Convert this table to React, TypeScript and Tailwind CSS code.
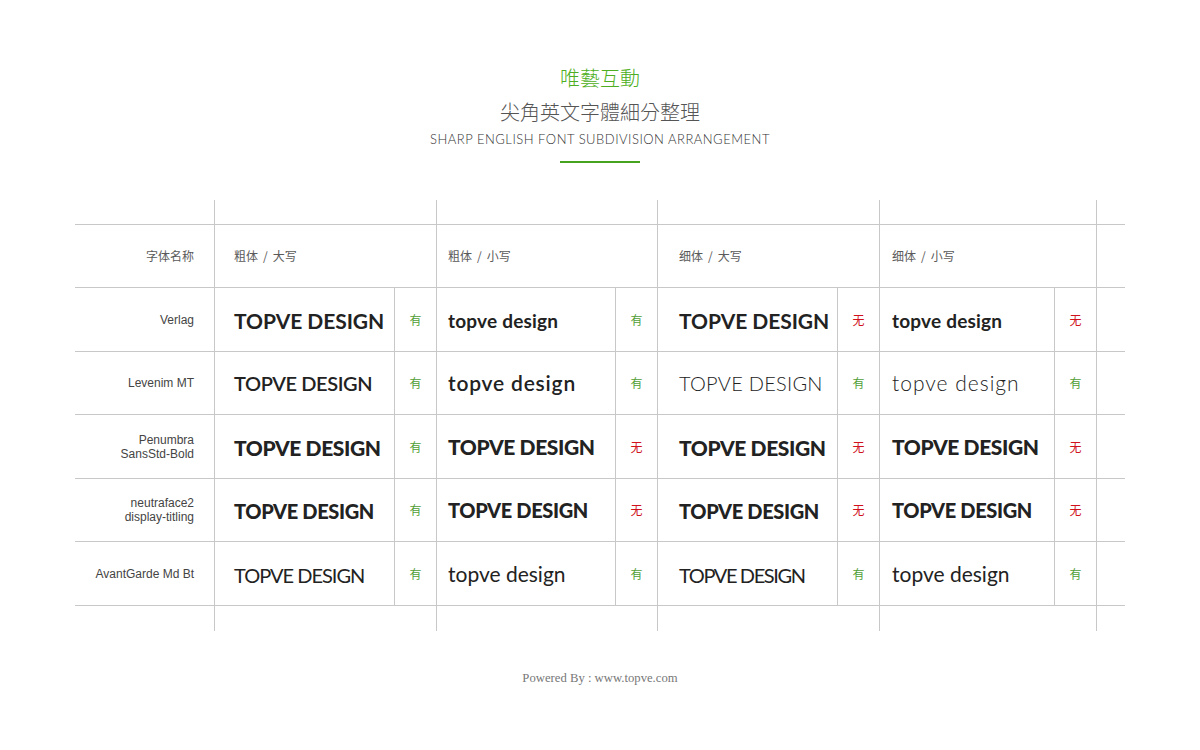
const marks = [
  ["有", "有", "无", "无"],
  ["有", "有", "有", "有"],
  ["有", "无", "无", "无"],
  ["有", "无", "无", "无"],
  ["有", "有", "有", "有"],
];

const rows = [
  {
    name: ["Verlag"],
    h: "h-[64px]",
    samples: [
      { text: "TOPVE DESIGN", cls: "font-['Lato'] font-bold text-[21px] tracking-[-0.05px] pt-[3px]" },
      { text: "topve design", cls: "font-['Lato'] font-bold text-[19px] tracking-[0.2px] pt-[3px]" },
      { text: "TOPVE DESIGN", cls: "font-['Lato'] font-bold text-[21px] tracking-[-0.05px] pt-[3px]" },
      { text: "topve design", cls: "font-['Lato'] font-bold text-[19px] tracking-[0.2px] pt-[3px]" },
    ],
  },
  {
    name: ["Levenim MT"],
    h: "h-[63px]",
    samples: [
      { text: "TOPVE DESIGN", cls: "font-['Lato'] font-semibold text-[20px] tracking-[-0.4px]" },
      { text: "topve design", cls: "font-['Lato'] font-semibold text-[21px] tracking-[0.8px]" },
      { text: "TOPVE DESIGN", cls: "font-['Lato'] font-light text-[20px] tracking-[0.25px]" },
      { text: "topve design", cls: "font-['Lato'] font-light text-[21px] tracking-[1px]" },
    ],
  },
  {
    name: ["Penumbra", "SansStd-Bold"],
    h: "h-[64px]",
    samples: [
      { text: "TOPVE DESIGN", cls: "font-['Lato'] font-black text-[21px] tracking-[-0.4px] pt-[2px]" },
      { text: "TOPVE DESIGN", cls: "font-['Lato'] font-black text-[21px] tracking-[-0.4px]" },
      { text: "TOPVE DESIGN", cls: "font-['Lato'] font-black text-[21px] tracking-[-0.4px] pt-[2px]" },
      { text: "TOPVE DESIGN", cls: "font-['Lato'] font-black text-[21px] tracking-[-0.4px]" },
    ],
  },
  {
    name: ["neutraface2", "display-titling"],
    h: "h-[63px]",
    samples: [
      { text: "TOPVE DESIGN", cls: "font-['Lato'] font-black text-[20px] tracking-[-0.35px] pt-[2px]" },
      { text: "TOPVE DESIGN", cls: "font-['Lato'] font-black text-[20px] tracking-[-0.35px]" },
      { text: "TOPVE DESIGN", cls: "font-['Lato'] font-black text-[20px] tracking-[-0.35px] pt-[2px]" },
      { text: "TOPVE DESIGN", cls: "font-['Lato'] font-black text-[20px] tracking-[-0.35px]" },
    ],
  },
  {
    name: ["AvantGarde Md Bt"],
    h: "h-[64px]",
    samples: [
      { text: "TOPVE DESIGN", cls: "font-['Lato'] font-normal text-[20px] tracking-[-1px] pt-[2px]" },
      { text: "topve design", cls: "font-['Lato'] font-normal text-[21px] tracking-[0px]" },
      { text: "TOPVE DESIGN", cls: "font-['Lato'] font-normal text-[20px] tracking-[-1.4px] pt-[2px]" },
      { text: "topve design", cls: "font-['Lato'] font-normal text-[21px] tracking-[0px]" },
    ],
  },
];

const groupW = ["w-[222px]", "w-[221px]", "w-[222px]", "w-[217px]"];
const sampleW = ["w-[180px]", "w-[179px]", "w-[180px]", "w-[175px]"];
const padL = ["pl-[19px]", "pl-[11px]", "pl-[21px]", "pl-[12px]"];
const headers = [
  ["粗体", "大写"],
  ["粗体", "小写"],
  ["细体", "大写"],
  ["细体", "小写"],
];

function EmptyRow({ h, bottom }: { h: string; bottom: boolean }) {
  return (
    <div className={`flex ${h} ${bottom ? "border-b border-[#c8c8c8]" : ""}`}>
      <div className="w-[139px]" />
      {groupW.map((w, i) => (
        <div key={i} className={`${w} border-l border-[#c8c8c8]`} />
      ))}
      <div className="w-[29px] border-l border-[#c8c8c8]" />
    </div>
  );
}

export default function App() {
  return (
    <div className="w-[1200px] h-[750px] bg-white flex flex-col">
      <div className="flex flex-col items-center">
        <div className="mt-[64px] text-[20px] leading-[28px] text-[#4cae20] font-['Noto_Sans_CJK_TC','Noto_Sans_CJK_SC',sans-serif] font-light">
          唯藝互動
        </div>
        <div className="mt-[6px] text-[20px] leading-[28px] text-[#555555] font-['Noto_Sans_CJK_TC','Noto_Sans_CJK_SC',sans-serif] font-light">
          尖角英文字體細分整理
        </div>
        <div className="mt-[4px] text-[13px] leading-[18px] text-[#333333] font-['Lato',sans-serif] font-light tracking-[0.5px]">
          SHARP ENGLISH FONT SUBDIVISION ARRANGEMENT
        </div>
        <div className="mt-[13px] w-[80px] h-[2px] bg-[#45a320]" />
      </div>

      <div className="mt-[37px] ml-[75px] w-[1050px] flex flex-col">
        <EmptyRow h="h-[25px]" bottom />

        <div className="flex h-[63px] border-b border-[#c8c8c8] text-[12px] text-[#5a5a5a] font-['Noto_Sans_CJK_SC',sans-serif]">
          <div className="w-[139px] flex items-center justify-end pr-[20px]">字体名称</div>
          {groupW.map((w, i) => (
            <div key={i} className={`${w} ${padL[i]} border-l border-[#c8c8c8] flex items-center`}>
              {headers[i][0]}
              <span className="mx-[5px]">/</span>
              {headers[i][1]}
            </div>
          ))}
          <div className="w-[29px] border-l border-[#c8c8c8]" />
        </div>

        {rows.map((r, ri) => (
          <div key={ri} className={`flex ${r.h} border-b border-[#c8c8c8]`}>
            <div className="w-[139px] flex flex-col items-end justify-center pr-[20px] text-[12px] leading-[14px] text-[#444444] font-['Liberation_Sans',sans-serif]">
              {r.name.map((n) => (
                <span key={n}>{n}</span>
              ))}
            </div>
            {r.samples.map((s, i) => (
              <div key={i} className={`${groupW[i]} flex border-l border-[#c8c8c8]`}>
                <div className={`${sampleW[i]} ${padL[i]} flex items-center text-[#222222] whitespace-nowrap ${s.cls}`}>
                  {s.text}
                </div>
                <div
                  className={`w-[42px] border-l border-[#c8c8c8] flex items-center justify-center text-[12px] font-['Noto_Sans_CJK_SC',sans-serif] ${
                    marks[ri][i] === "有" ? "text-[#4f9e35]" : "text-[#d0121d]"
                  }`}
                >
                  {marks[ri][i]}
                </div>
              </div>
            ))}
            <div className="w-[29px] border-l border-[#c8c8c8]" />
          </div>
        ))}

        <EmptyRow h="h-[25px]" bottom={false} />
      </div>

      <div className="mt-[39px] text-center text-[12.7px] leading-[16px] text-[#777777] font-['Liberation_Serif',serif]">
        Powered By : www.topve.com
      </div>
    </div>
  );
}
